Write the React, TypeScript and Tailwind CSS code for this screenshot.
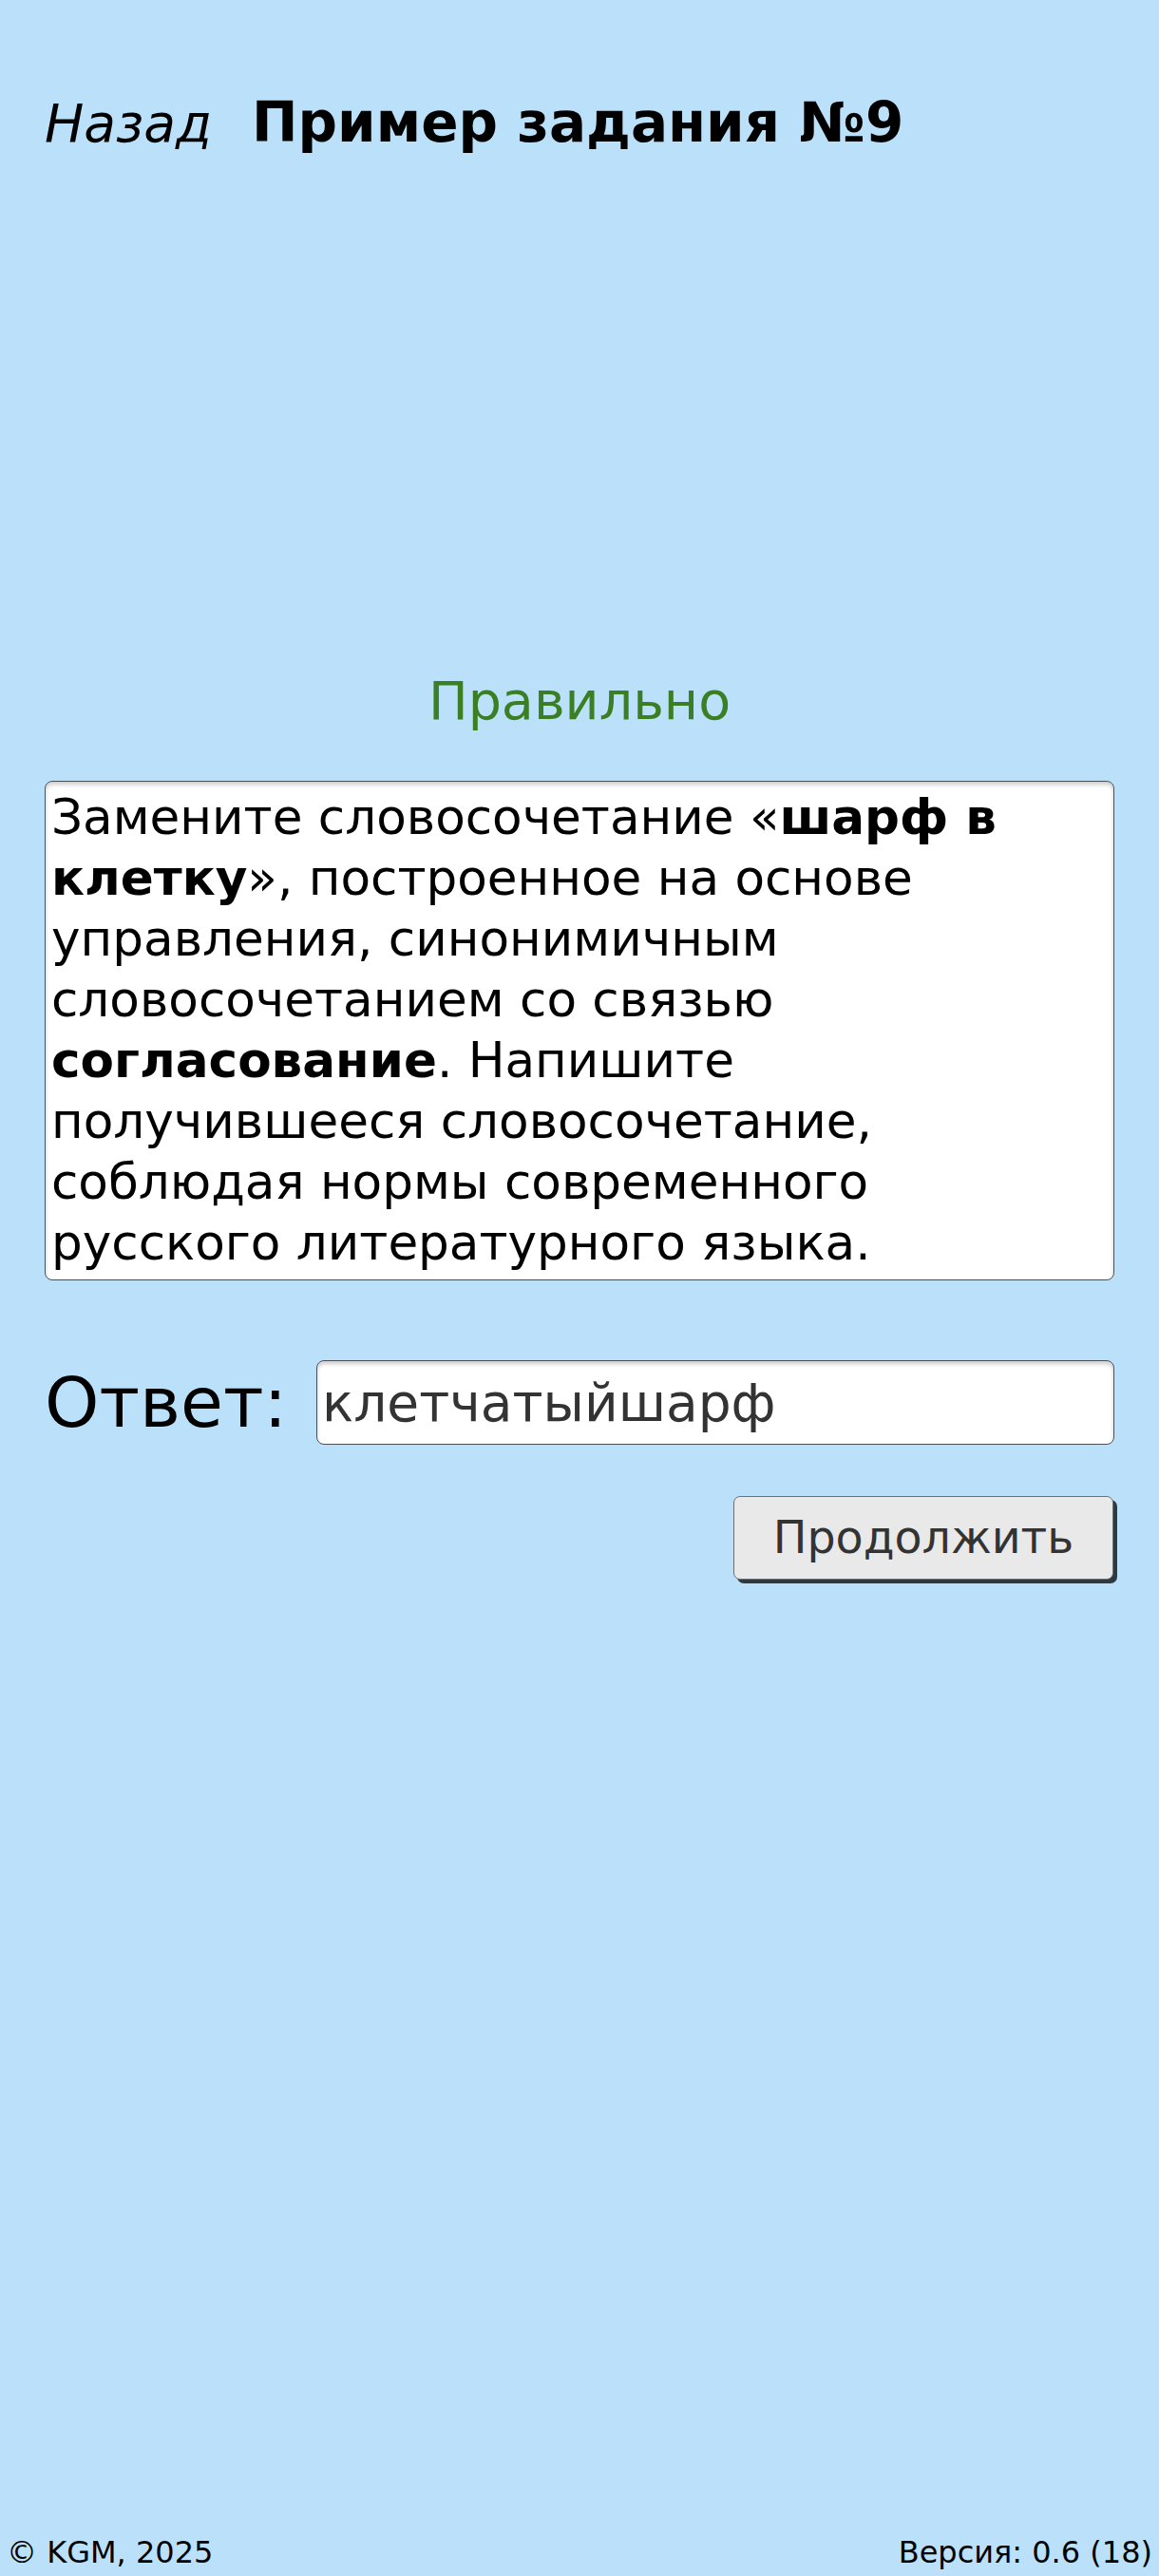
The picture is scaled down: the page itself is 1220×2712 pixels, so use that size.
import { useState } from "react";

const font = "font-['DejaVu_Sans',Verdana,sans-serif]";

export default function App() {
  const [answer, setAnswer] = useState("клетчатыйшарф");

  return (
    <div className={`flex min-h-[2712px] flex-col bg-[#bbe1fa] text-black ${font}`}>
      <div className="flex-1 px-[47px]">
        {/* header */}
        <div className="flex items-baseline pt-[97px] leading-[64px]">
          <a href="#" className="text-[55px] italic text-black">
            Назад
          </a>
          <h1 className="ml-[42px] text-[58px] font-bold">Пример задания №9</h1>
        </div>

        <p className="mt-[544px] text-center text-[55.5px] leading-[64px] text-[#3b7f24]">
          Правильно
        </p>

        <div className="mt-[52px] rounded-[8px] border-[1.5px] border-[#4a5055] bg-white pt-[5px] pr-[6px] pb-[7px] pl-[6px] text-[51.6px] leading-[64px] shadow-[inset_0_3px_4px_rgba(0,0,0,0.2)]">
          Замените словосочетание «<b>шарф в клетку</b>», построенное на основе
          управления, синонимичным словосочетанием со связью <b>согласование</b>.
          Напишите получившееся словосочетание, соблюдая нормы современного
          русского литературного языка.
        </div>

        <div className="mt-[84px] flex items-center">
          <label htmlFor="answer" className="w-[286px] shrink-0 text-[73px] leading-[86px]">
            Ответ:
          </label>
          <input
            id="answer"
            value={answer}
            onChange={e => setAnswer(e.target.value)}
            className={`h-[89px] min-w-0 flex-1 rounded-[8px] border-[1.5px] border-[#4a5055] bg-white px-[5px] text-[55px] text-[#333] shadow-[inset_0_3px_4px_rgba(0,0,0,0.2)] outline-none ${font}`}
          />
        </div>

        <div className="mt-[54px] flex justify-end pr-[1px]">
          <button
            className={`h-[88px] w-[400px] rounded-[7px] border-[1.5px] border-[#6b7075] bg-[#e9e9e9] text-[47.5px] text-[#333] shadow-[4px_4px_0_#2f3a40] ${font}`}
          >
            Продолжить
          </button>
        </div>
      </div>

      <footer className="flex items-baseline justify-between px-[7px] pb-[6px] text-[32px] leading-[37px]">
        <span>© KGM, 2025</span>
        <span>Версия: 0.6 (18)</span>
      </footer>
    </div>
  );
}
